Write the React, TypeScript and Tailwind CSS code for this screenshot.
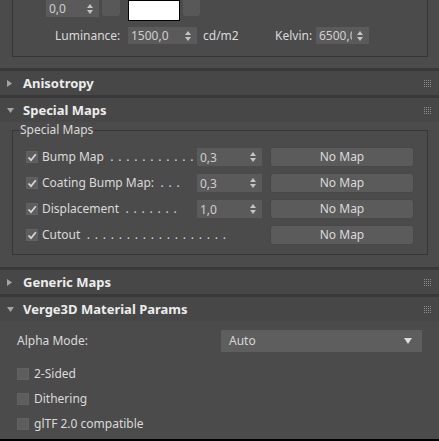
import React from "react";

const FONT = { fontFamily: '"Noto Sans", "Open Sans", sans-serif' };

// tiny up/down arrows drawn on spinners
const SpinArrows: React.FC = () => (
    <svg width="6" height="10" viewBox="0 0 6 10" className="shrink-0">
        <path d="M3 0 L6 4 L0 4 Z" fill="#c4c4c4" />
        <path d="M0 6 L6 6 L3 10 Z" fill="#c4c4c4" />
    </svg>
);

interface SpinnerProps {
    value: string;
    className?: string;
    textClass?: string;
}

const Spinner: React.FC<SpinnerProps> = ({ value, className, textClass }) => (
    <div className={`flex items-center justify-between bg-[#5a5a5a] pl-[3px] pr-[6px] ${className ?? ""}`}>
        <span className={`overflow-hidden whitespace-nowrap text-[12px] leading-[15px] text-[#cfcfcf] ${textClass ?? ""}`}>
            {value}
        </span>
        <SpinArrows />
    </div>
);

const CheckBox: React.FC<{ checked?: boolean }> = ({ checked }) => (
    <div className="flex h-[12px] w-[12px] shrink-0 items-center justify-center bg-[#5d5d5d] border border-[#626262]">
        {checked && (
            <svg width="10" height="9" viewBox="0 0 10 9">
                <path d="M1.5 4.5 L4 7.2 L8.8 1.2" stroke="#d6d6d6" strokeWidth="1.8" fill="none" />
            </svg>
        )}
    </div>
);

const Grip: React.FC = () => (
    <div className="grid grid-cols-4 gap-[1px]">
        {Array.from({ length: 16 }).map((_, i) => (
            <div key={i} className="h-[1px] w-[1px] bg-[#8c8c8c]" />
        ))}
    </div>
);

interface HeaderProps {
    title: string;
    open?: boolean;
}

const RolloutHeader: React.FC<HeaderProps> = ({ title, open }) => (
    <div className="flex h-[24px] items-center bg-[#474747] pl-[7px] pr-[8px]">
        <div className="flex w-[16px] shrink-0 items-center">
            {open ? (
                <svg width="7" height="5" viewBox="0 0 7 5">
                    <path d="M0 0 L7 0 L3.5 5 Z" fill="#a4a4a4" />
                </svg>
            ) : (
                <svg width="5" height="7" viewBox="0 0 5 7">
                    <path d="M0 0 L5 3.5 L0 7 Z" fill="#a4a4a4" />
                </svg>
            )}
        </div>
        <span className="flex-1 text-[13px] font-bold leading-[16px] text-[#ececec]">{title}</span>
        <Grip />
    </div>
);

const Sep: React.FC = () => <div className="h-[3px] bg-[#393939]" />;

interface MapRowProps {
    label: string;
    dots: number;
    value?: string;
}

const MapRow: React.FC<MapRowProps> = ({ label, dots, value }) => (
    <div className="flex h-[20px] items-center">
        <CheckBox checked />
        <div className="ml-[4px] flex w-[155px] shrink-0 items-center whitespace-nowrap text-[12px] leading-[16px] text-[#dadada]">
            <span>{label}</span>
            <span className="ml-[4px] flex">
                {Array.from({ length: dots }).map((_, i) => (
                    <span key={i} className="inline-block w-[8px] text-center">.</span>
                ))}
            </span>
        </div>
        {value ? (
            <Spinner value={value} className="h-[18px] w-[65px] shrink-0" />
        ) : (
            <div className="w-[65px] shrink-0" />
        )}
        <button className="ml-[8px] h-[20px] w-[144px] shrink-0 rounded-[3px] border border-[#474747] bg-[#5b5b5b] text-[12px] leading-[16px] text-[#dadada]">
            No Map
        </button>
    </div>
);

const OptionRow: React.FC<{ label: string }> = ({ label }) => (
    <div className="flex h-[25px] items-center">
        <CheckBox />
        <span className="ml-[5px] text-[12px] leading-[16px] text-[#dadada]">{label}</span>
    </div>
);

export default function App() {
    return (
        <div style={FONT} className="flex h-[441px] w-[439px] flex-col overflow-hidden bg-[#4b4b4b]">
            {/* remains of the rollout above */}
            <div className="h-[68px] shrink-0 bg-[#4b4b4b] pl-[12px] pr-[11px]">
                <div className="h-[57px] border-x border-b border-[#363636] pl-[33px]">
                    <div className="flex items-start">
                        <Spinner value="0,0" className="h-[17px] w-[53px]" />
                        <div className="ml-[3px] h-[16px] w-[18px] rounded-b-[3px] bg-[#585858]" />
                        <div className="ml-[8px] h-[21px] w-[52px] border border-black bg-white" />
                        <div className="ml-[3px] h-[16px] w-[17px] rounded-b-[3px] bg-[#585858]" />
                    </div>
                    <div className="mt-[6px] flex h-[17px] items-center text-[12px] leading-[16px] text-[#dadada]">
                        <span className="ml-[9px] w-[73px]">Luminance:</span>
                        <Spinner value="1500,0" className="h-[17px] w-[69px]" />
                        <span className="ml-[6px] w-[72px]">cd/m2</span>
                        <span className="w-[41px]">Kelvin:</span>
                        <Spinner value="6500,0" className="h-[17px] w-[53px]" textClass="w-[33px]" />
                    </div>
                </div>
            </div>

            <Sep />
            <RolloutHeader title="Anisotropy" />
            <Sep />
            <RolloutHeader title="Special Maps" open />

            <div className="h-[145px] shrink-0 pl-[12px] pr-[11px] pt-[8px]">
                <div className="relative h-[125px] border border-[#363636] pl-[13px] pt-[16px]">
                    <span className="absolute -top-[9px] left-[6px] bg-[#4b4b4b] px-[1px] text-[12px] leading-[16px] text-[#dadada]">
                        Special Maps
                    </span>
                    <div className="flex flex-col gap-[6px]">
                        <MapRow label="Bump Map" dots={11} value="0,3" />
                        <MapRow label="Coating Bump Map:" dots={3} value="0,3" />
                        <MapRow label="Displacement" dots={7} value="1,0" />
                        <MapRow label="Cutout" dots={18} />
                    </div>
                </div>
            </div>

            <Sep />
            <RolloutHeader title="Generic Maps" />
            <Sep />
            <RolloutHeader title="Verge3D Material Params" open />

            <div className="flex-1 pl-[17px] pt-[9px]">
                <div className="flex h-[22px] items-center">
                    <span className="w-[204px] text-[12px] leading-[16px] text-[#dadada]">Alpha Mode:</span>
                    <div className="flex h-[22px] w-[201px] items-center justify-between bg-[#5e5e5e] pl-[8px] pr-[10px]">
                        <span className="text-[12px] leading-[16px] text-[#d6d6d6]">Auto</span>
                        <svg width="8" height="6" viewBox="0 0 8 6">
                            <path d="M0 0 L8 0 L4 6 Z" fill="#dcdcdc" />
                        </svg>
                    </div>
                </div>
                <div className="mt-[9px] flex flex-col">
                    <OptionRow label="2-Sided" />
                    <OptionRow label="Dithering" />
                    <OptionRow label="glTF 2.0 compatible" />
                </div>
            </div>
            <div className="h-[2px] shrink-0 bg-black" />
        </div>
    );
}
